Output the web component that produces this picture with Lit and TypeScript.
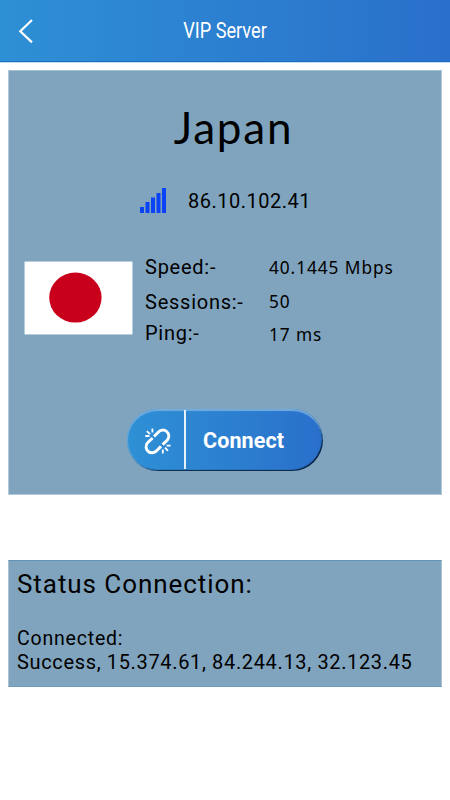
import { LitElement, html, css, svg } from "lit";
import { customElement, property } from "lit/decorators.js";

@customElement("vip-header")
class VipHeader extends LitElement {
  @property() heading = "";

  static styles = css`
    :host {
      display: block;
      height: 62px;
      box-sizing: border-box;
      border-bottom: 1px solid #1a6cc4;
      background: linear-gradient(90deg, #2e90d5, #2a70cb);
      color: #fff;
      box-shadow: 0 1px 0 #c3dcef;
    }
    .bar {
      display: grid;
      grid-template-columns: 52px 1fr 52px;
      align-items: center;
      height: 62px;
    }
    .back {
      display: block;
      margin-left: 18px;
      width: 15px;
      height: 24px;
    }
    .title {
      font: 22px/62px Roboto, sans-serif;
      text-align: center;
      white-space: nowrap;
      transform: scaleX(0.825);
    }
  `;

  render() {
    return html`<div class="bar">
      <svg class="back" viewBox="0 0 15 24" fill="none" stroke="#fff" stroke-width="2.2">
        <path d="M14 1 2.3 12.2 14 23.4" />
      </svg>
      <div class="title">${this.heading}</div>
    </div>`;
  }
}

@customElement("connect-button")
class ConnectButton extends LitElement {
  static styles = css`
    :host {
      display: block;
    }
    .button {
      display: flex;
      align-items: stretch;
      box-sizing: border-box;
      width: 196px;
      height: 62px;
      padding: 0;
      border: 0;
      border-radius: 31px;
      overflow: hidden;
      background: linear-gradient(90deg, #2e90d5, #2a70cb);
      box-shadow: inset 0 2px 1px #71acdf, inset 1px 0 1px #5fa4d9, inset -1px -1px 1px #06182c;
      color: #fff;
    }
    .icon {
      display: flex;
      align-items: center;
      justify-content: center;
      width: 57px;
      padding-left: 4px;
      box-sizing: border-box;
      padding-top: 1px;
    }
    .rule {
      width: 2px;
      margin: 1px 0 2px;
      background: #e7f1fb;
    }
    .label {
      padding-left: 17px;
      font: bold 21.5px/63px Roboto, sans-serif;
      letter-spacing: 0.1px;
    }
  `;

  render() {
    return html`<button class="button">
      <span class="icon">
        <svg width="28" height="28" viewBox="0 0 28 28" fill="none" stroke="#fff" stroke-width="2.9">
          <path d="M10 9.6 14.2 5.2A6 6 0 0 1 23.4 13L18.6 17.6" />
          <path d="M8.6 11 3.6 15.8A6 6 0 0 0 12.6 23.8L17 19.4" />
          <path stroke-width="1.8" d="M1.3 9H5.4M2.8 4.2 6 7.2M8.4 1.4V5.4M18.8 22.4V26.4M21 20.6 24 23.8M22.6 18.6H26.6" />
        </svg>
      </span>
      <span class="rule"></span>
      <span class="label">Connect</span>
    </button>`;
  }
}

@customElement("app-root")
class AppRoot extends LitElement {
  static styles = css`
    :host {
      display: block;
      height: 800px;
      overflow: hidden;
      background: #fff;
      color: #000;
      font: 20px/24px Roboto, sans-serif;
      white-space: nowrap;
    }
    .server {
      box-sizing: border-box;
      height: 425px;
      margin: 8px 8px 0;
      padding-top: 26px;
      border: 1px solid #b3cadb;
      border-top-color: #a5c0d3;
      background: #80a4be;
    }
    .country {
      margin-left: 17px;
      height: 60px;
      text-align: center;
      font: 44px/60px Lato, sans-serif;
      letter-spacing: 1.8px;
    }
    .address {
      display: flex;
      margin: 32px 0 0 131px;
      gap: 22px;
    }
    .signal {
      display: block;
      width: 26px;
      height: 25px;
      margin-top: -1px;
    }
    .ip {
      letter-spacing: 0.5px;
    }
    .details {
      display: grid;
      grid-template-columns: 121px 124px 1fr;
      margin: 42px 0 0 15px;
      height: 91px;
    }
    .flag {
      display: block;
      margin-top: 6px;
    }
    .label {
      letter-spacing: 0.75px;
    }
    .label + .label {
      margin-top: 11px;
    }
    .label + .label + .label {
      margin-top: 7px;
    }
    .value {
      font: 18.8px/24px "Noto Sans", sans-serif;
      letter-spacing: 1px;
      transform: scaleX(0.92);
      transform-origin: 0 50%;
    }
    .value + .value {
      margin-top: 10px;
    }
    .value + .value + .value {
      margin-top: 9px;
    }
    .action {
      margin: 63px 0 0 118px;
    }
    .status {
      box-sizing: border-box;
      height: 127px;
      margin: 65px 8px 0;
      padding: 11px 0 0 8px;
      border: 1px solid #a9c3d5;
      border-top-color: #6095b7;
      border-bottom-color: #6b9bba;
      background: #80a4be;
    }
    .heading {
      font-size: 26px;
      letter-spacing: 0.93px;
    }
    .line {
      letter-spacing: 0.65px;
    }
    .state {
      margin-top: 31px;
      letter-spacing: 0.8px;
      font-size: 19.5px;
      line-height: 23px;
    }
  `;

  private stats = [
    ["Speed:-", "40.1445 Mbps"],
    ["Sessions:-", "50"],
    ["Ping:-", "17 ms"],
  ];

  private bars = [6, 11, 15.5, 20, 25];

  render() {
    return html`
      <vip-header heading="VIP Server"></vip-header>
      <section class="server">
        <div class="country">Japan</div>
        <div class="address">
          <svg class="signal" viewBox="0 0 26 25" fill="#0a43f5">
            ${this.bars.map((h, i) => svg`<rect x=${i * 5.5} y=${25 - h} width="4" height=${h} />`)}
          </svg>
          <span class="ip">86.10.102.41</span>
        </div>
        <div class="details">
          <svg class="flag" width="109" height="74" viewBox="0 0 109 74">
            <rect x="0" y="0" width="109" height="74" fill="#6a9ebf" />
            <rect x="0.5" y="0.5" width="108" height="73" fill="#fff" />
            <ellipse cx="51.4" cy="36.6" rx="26.2" ry="25" fill="#c9001b" />
          </svg>
          <div>${this.stats.map(([label]) => html`<div class="label">${label}</div>`)}</div>
          <div>${this.stats.map(([, value]) => html`<div class="value">${value}</div>`)}</div>
        </div>
        <connect-button class="action"></connect-button>
      </section>
      <section class="status">
        <div class="heading">Status Connection:</div>
        <div class="line state">Connected:</div>
        <div class="line">Success, 15.374.61, 84.244.13, 32.123.45</div>
      </section>
    `;
  }
}
